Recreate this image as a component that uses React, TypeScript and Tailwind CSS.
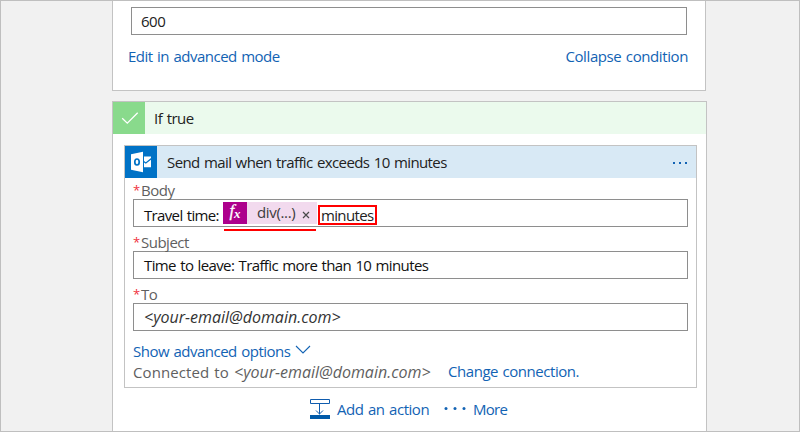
import React from "react";

const INPUT = "flex h-[28px] w-[555px] items-center border border-[#8e8e8e] bg-white pl-[10px] text-[#111]";

function Label({ text }: { text: string }) {
  return (
    <div className="flex h-[19px] whitespace-nowrap leading-[21px] text-[#5f5f5f]">
      <span className="w-[8px] text-[13px] text-[#f0303c]">*</span>
      <span className="tracking-[-0.5px]">{text}</span>
    </div>
  );
}

function Check() {
  return (
    <div className="flex size-8 items-center justify-center bg-[#89da8c]">
      <svg width="32" height="32" viewBox="0 0 32 32" fill="none" stroke="#fff" strokeWidth="1.3">
        <path d="M9.200 16.300 14.300 21.200 24.700 10.800" />
      </svg>
    </div>
  );
}

function Outlook() {
  return (
    <svg width="32" height="32" viewBox="0 0 32 32" className="bg-[#0072c6]">
      <path d="M6 8.200 18 5.800V26.200L6 23.800Z" fill="#fff" />
      <ellipse cx="12" cy="16" rx="2.200" ry="3" fill="none" stroke="#0072c6" strokeWidth="1.700" />
      <path d="M19 10.500H26V12L20.800 16.200 19 14.900ZM19 16.500 20.800 17.800 26 13.700V21.300H19Z" fill="#fff" />
    </svg>
  );
}

export default function App() {
  return (
    <div className="h-[432px] w-[800px] overflow-hidden border border-[#bfbfbf] bg-[#f1f1f1] pl-[111px] font-['Open_Sans','Noto_Sans',sans-serif] text-[15px] leading-[20px] text-[#1263b4] [word-spacing:1px]">
      <section className="h-[90px] w-[594px] border border-t-0 border-[#c3c3c3] bg-white pl-[18px] pt-[6px]">
        <div className="flex h-[28px] w-[556px] items-center border border-[#8e8e8e] pl-[9px] text-[#222]">
          <span className="tracking-[-0.5px]">600</span>
        </div>
        <div className="-ml-[3px] mt-[11px] flex w-[560px] justify-between whitespace-nowrap">
          <span className="tracking-[-0.5px]">Edit in advanced mode</span>
          <span className="tracking-[-0.4px]">Collapse condition</span>
        </div>
      </section>

      <section className="mt-[10px] h-[340px] w-[595px] border border-[#c3c3c3] bg-white">
        <header className="flex h-8 items-center bg-[#ebfaed] text-[#222]">
          <Check />
          <span className="ml-[9px] tracking-[-0.5px]">If true</span>
        </header>

        <div className="ml-[11px] mt-[11px] h-[243px] w-[573px] border border-[#c3c3c3]">
          <header className="flex h-8 items-center bg-[#d8e9f5] text-[#222]">
            <Outlook />
            <span className="ml-[10px] whitespace-nowrap tracking-[-0.6px]">Send mail when traffic exceeds 10 minutes</span>
            <svg width="16" height="4" viewBox="0 0 16 4" className="ml-auto mr-[8px] mt-[2px]" fill="#1263b4">
              <path d="M1 1h2v2H1zM7 1h2v2H7zM13 1h2v2h-2z" />
            </svg>
          </header>

          <div className="pl-[8px] pt-[2px]">
            <Label text="Body" />
            <div className={INPUT}>
              <span className="mt-[3px] w-[79px] whitespace-nowrap tracking-[-0.65px]">Travel time:</span>
              <span className="relative flex h-[22px] w-[94px] items-center bg-[#f2daee] text-[#3c3c3c]">
                <span className="flex h-[22px] w-[24px] items-center justify-center bg-[#ad008c] font-['Liberation_Serif',serif] text-[17px] italic leading-[20px] text-white">
                  <span className="-mt-[4px] [-webkit-text-stroke:0.3px_white]">f</span>
                  <span className="mt-[2px] text-[13px] font-bold">x</span>
                </span>
                <span className="-mt-[2px] ml-[10px] w-[40px] whitespace-nowrap tracking-[-0.35px]">div(...)</span>
                <svg width="8" height="8" viewBox="0 0 8 8" className="ml-[5px] mt-[3px]" stroke="#4a4a4a" strokeWidth="1.200">
                  <path d="M1 1 7 7M7 1 1 7" />
                </svg>
                <span className="absolute left-[1px] top-[27px] h-[2px] w-[92px] bg-[#f00]" />
              </span>
              <span className="ml-[1px] mt-[3px] flex h-[20px] w-[59px] items-center whitespace-nowrap border-2 border-[#f00] pl-[1px] tracking-[-0.65px] text-[#222]">
                minutes
              </span>
            </div>
            <div className="mt-[5px]">
              <Label text="Subject" />
            </div>
            <div className={INPUT}>
              <span className="whitespace-nowrap tracking-[-0.62px]">Time to leave: Traffic more than 10 minutes</span>
            </div>
            <div className="mt-[5px]">
              <Label text="To" />
            </div>
            <div className={INPUT}>
              <span className="whitespace-nowrap text-[16px] italic text-[#333]">&lt;your-email@domain.com&gt;</span>
            </div>
            <div className="mt-[10px] flex items-center whitespace-nowrap">
              <span className="w-[162px] tracking-[-0.5px]">Show advanced options</span>
              <svg width="16" height="10" viewBox="0 0 16 10" className="-mt-[2px]" fill="none" stroke="#1263b4" strokeWidth="1.100">
                <path d="M1 1 8 8 15 1" />
              </svg>
            </div>
            <div className="mt-[1px] flex whitespace-nowrap text-[#5f5f5f]">
              <span className="w-[101px] tracking-[0.1px]">Connected to</span>
              <span className="w-[214px] text-[16px] italic">&lt;your-email@domain.com&gt;</span>
              <span className="-mt-[1px] tracking-[-0.45px] text-[#1263b4]">Change connection.</span>
            </div>
          </div>
        </div>

        <div className="mt-[11px] flex whitespace-nowrap pl-[197px]">
          <svg width="20" height="20" viewBox="0 0 20 20" fill="none" stroke="#0f5cae">
            <path d="M.5 .5h19v4H.5zM9.500 5v10.500M6 11.500 9.500 15l3.500-3.500" />
            <path d="M0 16h20v4H0z" fill="#005aa9" stroke="none" />
          </svg>
          <span className="ml-[7px] w-[107px] tracking-[-0.45px]">Add an action</span>
          <svg width="22" height="20" viewBox="0 0 22 20" fill="#1263b4">
            <circle cx="2" cy="9.500" r="1.500" />
            <circle cx="11" cy="9.500" r="1.500" />
            <circle cx="20" cy="9.500" r="1.500" />
          </svg>
          <span className="ml-[7px] tracking-[-0.7px]">More</span>
        </div>
      </section>
      <div className="-ml-[111px] h-px bg-[#bfbfbf]" />
    </div>
  );
}
